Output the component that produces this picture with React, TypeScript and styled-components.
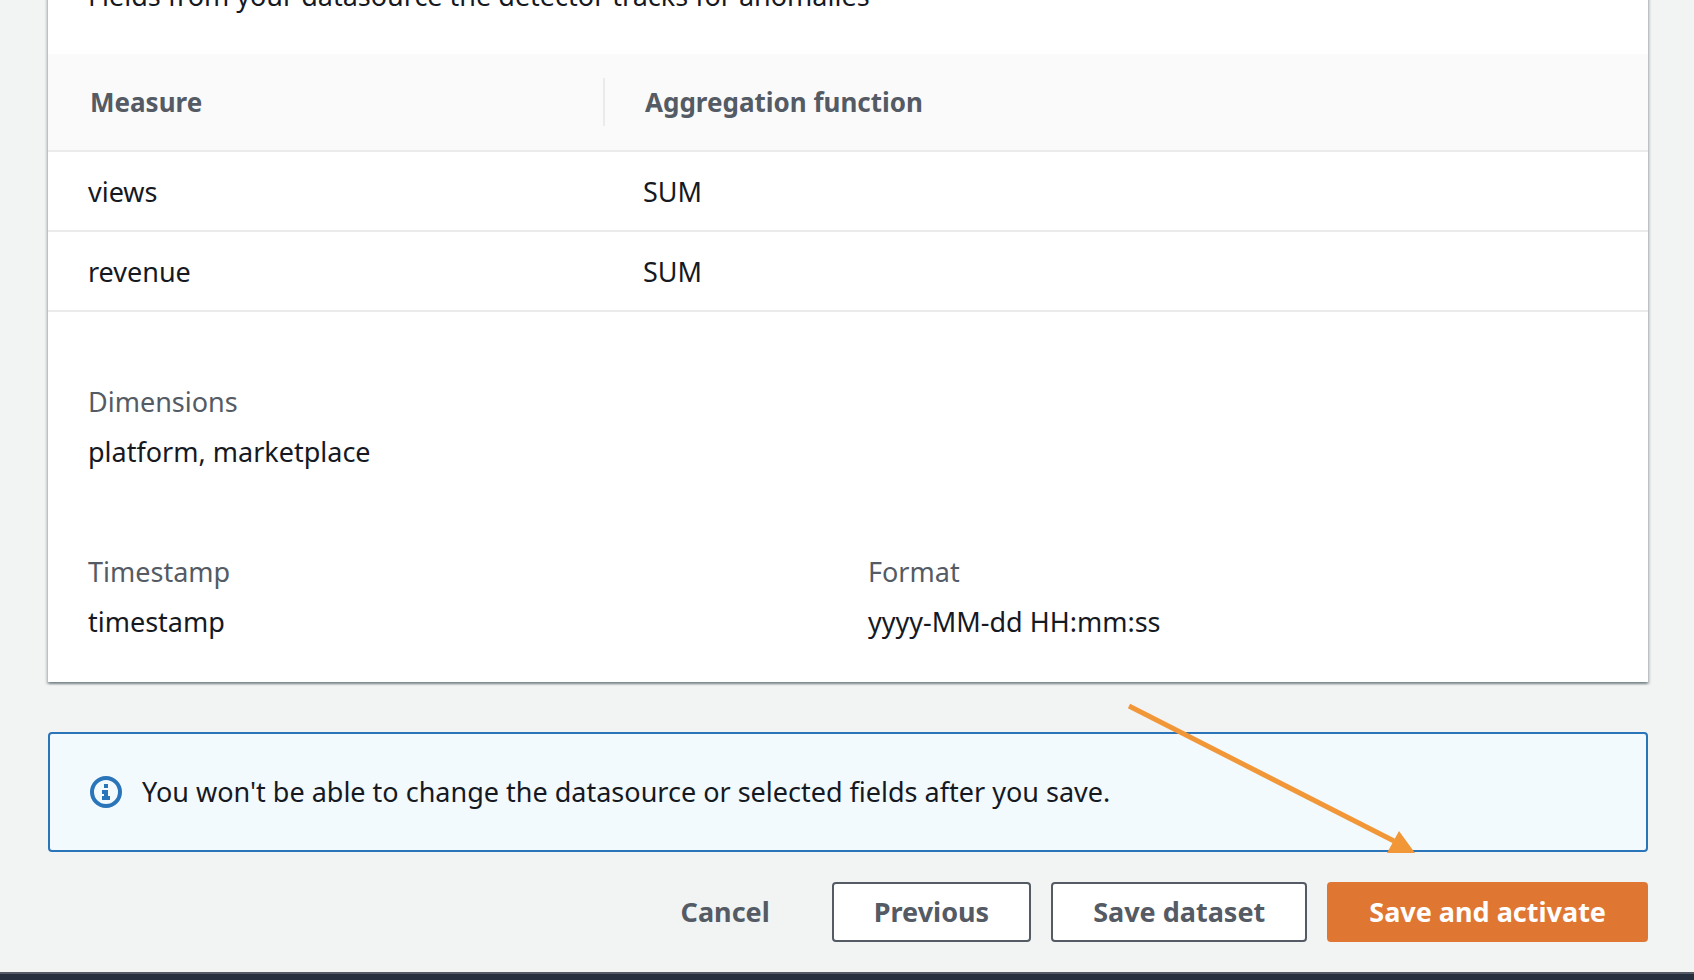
import React from "react";
import styled, { createGlobalStyle } from "styled-components";

const GlobalStyle = createGlobalStyle`
  *, *::before, *::after { box-sizing: border-box; }
  body {
    margin: 0;
    background: #f2f3f3;
    color: #16191f;
    font-family: "Noto Sans", "Open Sans", sans-serif;
    font-size: 27px;
    line-height: 40px;
  }
`;

const Page = styled.div`
  display: flex;
  flex-direction: column;
  min-height: 100vh;
  overflow: hidden;
`;

const Main = styled.main`
  display: flex;
  flex-direction: column;
  padding: 0 46px 30px 48px;
`;

/* The top of the card is scrolled out of view. */
const Card = styled.section`
  margin-top: -64px;
  padding: 40px 0;
  background: #ffffff;
  box-shadow:
    0 2px 2px rgba(0, 28, 36, 0.3),
    2px 2px 2px rgba(0, 28, 36, 0.15),
    -2px 2px 2px rgba(0, 28, 36, 0.15);
`;

const CardDescription = styled.p`
  margin: 0 0 38px;
  padding: 0 40px;
`;

const MeasureTable = styled.table`
  width: 100%;
  table-layout: fixed;
  border-spacing: 0;
  text-align: left;
`;

const HeaderCell = styled.th<{ $width?: string }>`
  width: ${({ $width }) => $width ?? "auto"};
  padding: 24px 0;
  background: #fafafa;
  border-bottom: 2px solid #ebebeb;
  color: #545b64;
  font-size: 26px;
  font-weight: 700;
`;

const HeaderLabel = styled.div<{ $divided?: boolean }>`
  padding: 4px 40px;
  border-left: 2px solid ${({ $divided }) => ($divided ? "#ebebeb" : "transparent")};
`;

const Cell = styled.td`
  padding: 20px 40px 18px;
  border-bottom: 2px solid #ebebeb;
`;

const FieldRow = styled.dl<{ $spacing: number }>`
  display: grid;
  grid-template-columns: 1fr 1fr;
  column-gap: 40px;
  margin: ${({ $spacing }) => $spacing}px 40px 0;
`;

const Field = styled.div`
  display: flex;
  flex-direction: column;
  gap: 10px;
`;

const FieldName = styled.dt`
  color: #545b64;
`;

const FieldValue = styled.dd`
  margin: 0;
`;

const Alert = styled.div`
  position: relative;
  display: flex;
  align-items: center;
  gap: 20px;
  margin-top: 50px;
  padding: 38px 40px;
  background: #f2fafd;
  border: 2px solid #2a74ba;
  border-radius: 4px;
`;

const InfoIcon = styled.svg`
  flex: none;
  width: 32px;
  height: 32px;
`;

const Arrow = styled.svg`
  position: absolute;
  right: 228px;
  bottom: -6px;
  width: 294px;
  height: 156px;
  pointer-events: none;
`;

const Actions = styled.div`
  display: flex;
  justify-content: flex-end;
  gap: 20px;
  margin-top: 30px;
`;

const variants = {
  link: { background: "transparent", border: "transparent", color: "#545b64" },
  normal: { background: "#ffffff", border: "#545b64", color: "#545b64" },
  primary: { background: "#df7733", border: "#df7733", color: "#ffffff" },
};

const Button = styled.button<{ $variant: keyof typeof variants }>`
  padding: 8px 40px;
  background: ${({ $variant }) => variants[$variant].background};
  border: 2px solid ${({ $variant }) => variants[$variant].border};
  border-radius: 4px;
  color: ${({ $variant }) => variants[$variant].color};
  font: inherit;
  font-weight: 700;
  cursor: pointer;
`;

const Footer = styled.footer`
  flex: 1;
  min-height: 8px;
  background: #252f3d;
  border-top: 2px solid #545b64;
`;

const measures = [
  { name: "views", aggregation: "SUM" },
  { name: "revenue", aggregation: "SUM" },
];

export default function App() {
  return (
    <Page>
      <GlobalStyle />
      <Main>
        <Card>
          <CardDescription>
            Fields from your datasource the detector tracks for anomalies
          </CardDescription>
          <MeasureTable>
            <thead>
              <tr>
                <HeaderCell scope="col" $width="555px">
                  <HeaderLabel>Measure</HeaderLabel>
                </HeaderCell>
                <HeaderCell scope="col">
                  <HeaderLabel $divided>Aggregation function</HeaderLabel>
                </HeaderCell>
              </tr>
            </thead>
            <tbody>
              {measures.map((measure) => (
                <tr key={measure.name}>
                  <Cell>{measure.name}</Cell>
                  <Cell>{measure.aggregation}</Cell>
                </tr>
              ))}
            </tbody>
          </MeasureTable>
          <FieldRow $spacing={70}>
            <Field>
              <FieldName>Dimensions</FieldName>
              <FieldValue>platform, marketplace</FieldValue>
            </Field>
          </FieldRow>
          <FieldRow $spacing={80}>
            <Field>
              <FieldName>Timestamp</FieldName>
              <FieldValue>timestamp</FieldValue>
            </Field>
            <Field>
              <FieldName>Format</FieldName>
              <FieldValue>yyyy-MM-dd HH:mm:ss</FieldValue>
            </Field>
          </FieldRow>
        </Card>
        <Alert role="status">
          <InfoIcon viewBox="0 0 32 32" aria-hidden="true">
            <circle cx="16" cy="16" r="14" fill="none" stroke="#2a74ba" strokeWidth="4" />
            <path d="M14 8h4v4h-4zM12 14h6v6h2v4h-8v-4h2v-2h-2z" fill="#2a74ba" />
          </InfoIcon>
          <span>
            You won't be able to change the datasource or selected fields after you save.
          </span>
          <Arrow viewBox="0 0 294 156" aria-hidden="true">
            <path d="M5 6L270 141" fill="none" stroke="#f29737" strokeWidth="5" />
            <path d="M275 131L291 153H263z" fill="#f29737" />
          </Arrow>
        </Alert>
        <Actions>
          <Button type="button" $variant="link">Cancel</Button>
          <Button type="button" $variant="normal">Previous</Button>
          <Button type="button" $variant="normal">Save dataset</Button>
          <Button type="button" $variant="primary">Save and activate</Button>
        </Actions>
      </Main>
      <Footer />
    </Page>
  );
}
